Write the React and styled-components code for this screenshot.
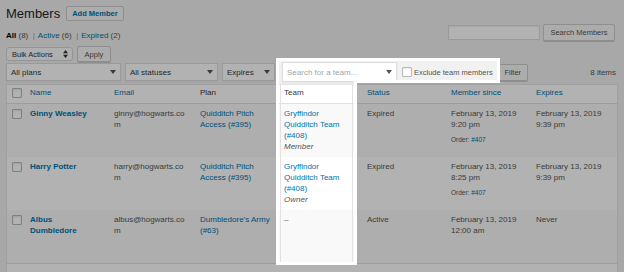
import React from 'react'
import styled, { createGlobalStyle } from 'styled-components'

const GlobalStyle = createGlobalStyle`
  html, body {
    margin: 0;
    padding: 0;
    background: #f1f1f1;
  }
  body {
    font-family: "Liberation Sans", Arial, sans-serif;
    color: #555;
    overflow: hidden;
  }
`

const members = [
    {
        id: 1,
        name: 'Ginny Weasley',
        email: 'ginny@hogwarts.com',
        plan: 'Quidditch Pitch Access (#395)',
        team: 'Gryffindor Quidditch Team (#408)',
        role: 'Member',
        status: 'Expired',
        since: 'February 13, 2019 9:20 pm',
        order: '#407',
        expires: 'February 13, 2019 9:39 pm'
    },
    {
        id: 2,
        name: 'Harry Potter',
        email: 'harry@hogwarts.com',
        plan: 'Quidditch Pitch Access (#395)',
        team: 'Gryffindor Quidditch Team (#408)',
        role: 'Owner',
        status: 'Expired',
        since: 'February 13, 2019 8:25 pm',
        order: '#407',
        expires: 'February 13, 2019 9:39 pm'
    },
    {
        id: 3,
        name: 'Albus Dumbledore',
        email: 'albus@hogwarts.com',
        plan: 'Dumbledore\u2019s Army (#63)',
        team: null,
        status: 'Active',
        since: 'February 13, 2019 12:00 am',
        expires: 'Never'
    }
]

const Caret = () => (
    <svg width='6' height='4' viewBox='0 0 6 4'>
        <path d='M0 0h6L3 4z' fill='#555' />
    </svg>
)

const UpDown = () => (
    <svg width='5' height='8' viewBox='0 0 5 8'>
        <path d='M0 3.2L2.5 0 5 3.2zM0 4.8L2.5 8 5 4.8z' fill='#333' />
    </svg>
)

const App = () => (
    <>
        <GlobalStyle />
        <Stage>
            <TitleBar>
                <Title>Members</Title>
                <AddButton>Add Member</AddButton>
            </TitleBar>

            <ViewsRow>
                <Views>
                    <Current>All</Current>&nbsp;<Count>(8)</Count>
                    <Sep>|</Sep>
                    <Link>Active</Link>&nbsp;<Count>(6)</Count>
                    <Sep>|</Sep>
                    <Link>Expired</Link>&nbsp;<Count>(2)</Count>
                </Views>
                <SearchBox>
                    <SearchInput type='search' />
                    <Button $w={72} $h={17}>Search Members</Button>
                </SearchBox>
            </ViewsRow>

            <BulkRow>
                <BulkSelect>
                    Bulk Actions
                    <UpDown />
                </BulkSelect>
                <Button $w={34} $h={16}>Apply</Button>
            </BulkRow>

            <FilterRow>
                <FakeSelect $w={115}>
                    All plans
                    <Caret />
                </FakeSelect>
                <FakeSelect $w={93}>
                    All statuses
                    <Caret />
                </FakeSelect>
                <FakeSelect $w={53}>
                    Expires
                    <Caret />
                </FakeSelect>
                <TeamFilter>
                    <FakeSelect $w={115} $h={20} $placeholder>
                        Search for a team...
                        <Caret />
                    </FakeSelect>
                    <CheckLabel>
                        <Checkbox />
                        Exclude team members
                    </CheckLabel>
                </TeamFilter>
                <Button $w={30} $h={17}>Filter</Button>
                <ItemCount>8 items</ItemCount>
            </FilterRow>

            <Table>
                <Row $head>
                    <CheckCell $head>
                        <Checkbox />
                    </CheckCell>
                    <Cell $head>
                        <Link>Name</Link>
                    </Cell>
                    <Cell $head>
                        <Link>Email</Link>
                    </Cell>
                    <Cell $head>
                        <HeadText>Plan</HeadText>
                    </Cell>
                    <Cell $head>
                        <HeadText>Team</HeadText>
                    </Cell>
                    <Cell $head>
                        <Link>Status</Link>
                    </Cell>
                    <Cell $head>
                        <Link>Member since</Link>
                    </Cell>
                    <Cell $head>
                        <Link>Expires</Link>
                    </Cell>
                </Row>

                {members.map((m, i) => (
                    <Row key={m.id} $striped={i % 2 === 0}>
                        <CheckCell>
                            <Checkbox />
                        </CheckCell>
                        <Cell>
                            <NameLink>{m.name}</NameLink>
                        </Cell>
                        <Cell>{m.email}</Cell>
                        <Cell>
                            <Link>{m.plan}</Link>
                        </Cell>
                        <Cell>
                            {m.team ? (
                                <>
                                    <Link>{m.team}</Link>
                                    <Role>{m.role}</Role>
                                </>
                            ) : (
                                '\u2013'
                            )}
                        </Cell>
                        <Cell>{m.status}</Cell>
                        <Cell>
                            {m.since}
                            {m.order && (
                                <OrderNote>
                                    Order: <Link>{m.order}</Link>
                                </OrderNote>
                            )}
                        </Cell>
                        <Cell>{m.expires}</Cell>
                    </Row>
                ))}

                <Row $foot />
            </Table>

            <Spotlight width='624' height='272' viewBox='0 0 624 272'>
                <path
                    fillRule='evenodd'
                    fill='rgba(0,0,0,0.3)'
                    d='M0 0H624V272H0Z M276 58H500V83H357V265H276Z'
                />
                <path
                    d='M280.5 84V262.5H352.5V84'
                    fill='none'
                    stroke='#e2e2e2'
                    strokeWidth='1'
                />
                <path
                    d='M277.5 59.5H498.5V81.5H355.5V263.5H277.5Z'
                    fill='none'
                    stroke='#fff'
                    strokeWidth='3'
                />
            </Spotlight>
        </Stage>
    </>
)
export default App

const Stage = styled.div`
    position: relative;
    width: 624px;
    height: 272px;
    overflow: hidden;
    box-sizing: border-box;
    padding: 0 6px;
    background: #f1f1f1;
`

const TitleBar = styled.div`
    display: flex;
    align-items: center;
    gap: 6px;
    height: 15px;
    padding-top: 6px;
    margin-bottom: 3px;
`

const Title = styled.h1`
    margin: 0;
    font-size: 13px;
    font-weight: 400;
    line-height: 15px;
    color: #23282d;
`

const AddButton = styled.span`
    display: inline-flex;
    align-items: center;
    box-sizing: border-box;
    height: 15px;
    padding: 0 5px;
    border: 1px solid #ccc;
    border-radius: 2px;
    background: #f7f7f7;
    color: #0073aa;
    font-size: 7.5px;
    font-weight: 700;
`

const ViewsRow = styled.div`
    display: flex;
    justify-content: space-between;
    height: 17px;
`

const Views = styled.div`
    align-self: flex-end;
    display: flex;
    font-size: 8px;
    line-height: 10px;
    white-space: nowrap;
`

const Current = styled.span`
    color: #000;
    font-weight: 700;
`

const Count = styled.span`
    color: #555;
`

const Sep = styled.span`
    margin: 0 3px 0 4.5px;
    color: #999;
`

const Link = styled.span`
    color: #0073aa;
`

const SearchBox = styled.div`
    display: flex;
    align-items: center;
    gap: 3px;
    margin-right: 3px;
`

const SearchInput = styled.input`
    box-sizing: border-box;
    width: 92px;
    height: 15px;
    margin: 0;
    padding: 0 4px;
    border: 1px solid #ddd;
    background: #fff;
    box-shadow: inset 0 1px 2px rgba(0, 0, 0, 0.07);
    outline: none;
`

const Button = styled.span`
    display: inline-flex;
    align-items: center;
    justify-content: center;
    box-sizing: border-box;
    width: ${p => p.$w}px;
    height: ${p => p.$h}px;
    border: 1px solid #ccc;
    border-radius: 2px;
    background: #f7f7f7;
    box-shadow: 0 1px 0 #ccc;
    color: #555;
    font-size: 7.5px;
    white-space: nowrap;
`

const BulkRow = styled.div`
    display: flex;
    align-items: center;
    gap: 4px;
    height: 16px;
    margin-top: 5px;
`

const BulkSelect = styled.div`
    display: flex;
    align-items: center;
    justify-content: space-between;
    box-sizing: border-box;
    width: 67px;
    height: 14px;
    padding: 0 4px 0 5px;
    border: 1px solid #d5d5d5;
    border-radius: 3px;
    background: #fbfbfb;
    color: #333;
    font-size: 7.5px;
`

const FilterRow = styled.div`
    display: flex;
    align-items: center;
    gap: 4px;
    height: 20px;
`

const FakeSelect = styled.div`
    display: flex;
    align-items: center;
    justify-content: space-between;
    box-sizing: border-box;
    width: ${p => p.$w}px;
    height: ${p => p.$h || 18}px;
    padding: 0 4px 0 4px;
    border: 1px solid #ddd;
    background: #fff;
    box-shadow: 0 1px 2px rgba(0, 0, 0, 0.05);
    color: ${p => (p.$placeholder ? '#a0a5aa' : '#32373c')};
    font-size: 8px;
    white-space: nowrap;
`

const TeamFilter = styled.div`
    display: flex;
    align-items: center;
    gap: 5px;
    padding: 0 1px 0 3px;
`

const CheckLabel = styled.label`
    display: flex;
    align-items: center;
    gap: 2px;
    color: #555;
    font-size: 7.5px;
    white-space: nowrap;
`

const Checkbox = styled.span`
    display: block;
    box-sizing: border-box;
    width: 10px;
    height: 10px;
    border: 1px solid #b4b9be;
    border-radius: 1px;
    background: #fff;
    box-shadow: inset 0 1px 2px rgba(0, 0, 0, 0.1);
`

const ItemCount = styled.span`
    margin-left: auto;
    margin-right: 2px;
    font-size: 8px;
    color: #555;
`

const Table = styled.div`
    margin-top: 2px;
    border: 1px solid #e5e5e5;
    background: #fff;
`

const Row = styled.div`
    display: grid;
    grid-template-columns: 17px 84px 86px 84px 83px 84px 85px 1fr;
    min-height: ${p => (p.$head || p.$foot ? '18px' : '53px')};
    background: ${p => (p.$striped ? '#f9f9f9' : '#fff')};
    border-bottom: ${p => (p.$head ? '1px solid #e1e1e1' : 'none')};
    border-top: ${p => (p.$foot ? '1px solid #e1e1e1' : 'none')};
`

const Cell = styled.div`
    min-width: 0;
    padding: ${p => (p.$head ? '1.5px 7px 0 6px' : '3.5px 7px 4px 6px')};
    font-size: 8px;
    line-height: 11.3px;
    color: #555;
    overflow-wrap: break-word;
`

const CheckCell = styled.div`
    padding: ${p => (p.$head ? '3px 0 0 5px' : '5px 0 0 5px')};
`

const HeadText = styled.span`
    color: #32373c;
`

const NameLink = styled.span`
    color: #0073aa;
    font-weight: 700;
`

const Role = styled.div`
    font-style: italic;
    color: #555;
`

const OrderNote = styled.div`
    margin-top: 4.6px;
    font-size: 6.5px;
    line-height: 9px;
    color: #555;
`

const Spotlight = styled.svg`
    position: absolute;
    left: 0;
    top: 0;
    pointer-events: none;
`
